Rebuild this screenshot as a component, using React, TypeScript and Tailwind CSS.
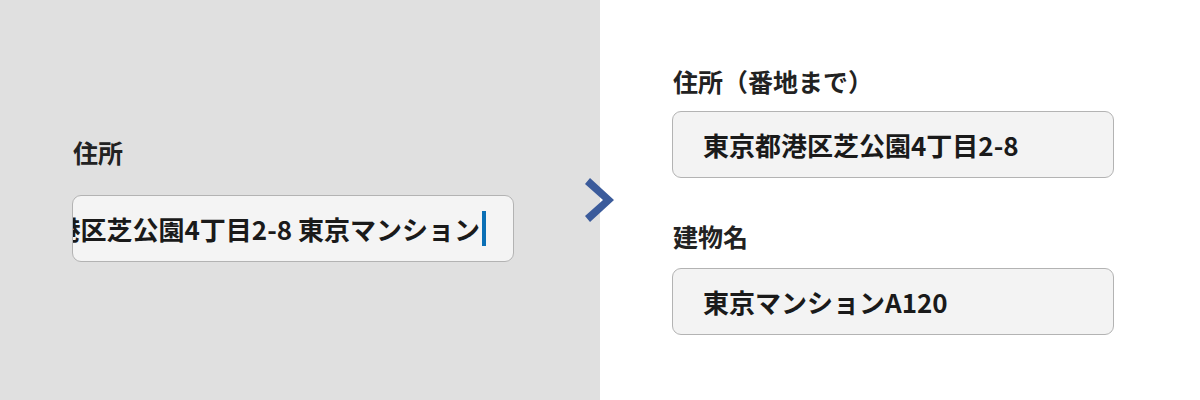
import React from 'react';

const font = { fontFamily: '"Noto Sans CJK JP", "Noto Sans", sans-serif' };

const Label: React.FC<{ children: React.ReactNode }> = ({ children }) => (
  <div className="text-[25px] leading-[32px] font-bold text-[#222222]">{children}</div>
);

const Field: React.FC<{ value: string }> = ({ value }) => (
  <div className="h-[67px] w-[442px] rounded-[9px] border border-[#b3b3b3] bg-[#f3f3f3] flex items-center pl-[30px]">
    <span className="text-[26px] font-bold text-[#1a1a1a] whitespace-nowrap">{value}</span>
  </div>
);

// input that is being typed into: text scrolled to the end, caret after it
const ActiveField: React.FC<{ value: string }> = ({ value }) => (
  <div className="h-[67px] w-[442px] rounded-[9px] border border-[#b3b3b3] bg-[#f4f4f4] flex items-center justify-end overflow-hidden pr-[27px]">
    <span className="text-[26px] font-bold text-[#1a1a1a] whitespace-nowrap">{value}</span>
    <span className="ml-[2px] h-[35px] w-[4px] shrink-0 bg-[#0a6fb5]" />
  </div>
);

export default function App() {
  return (
    <div className="relative flex h-[400px] w-[1200px]" style={font}>
      <div className="flex w-[600px] flex-col justify-center bg-[#e0e0e0] pl-[72px] pb-[2px]">
        <div className="mb-[27px] pl-[1px]">
          <Label>住所</Label>
        </div>
        <ActiveField value="東京都港区芝公園4丁目2-8 東京マンション" />
      </div>

      <div className="flex w-[600px] flex-col justify-center bg-white pl-[72px]">
        <div className="mb-[14px] pl-[1px]">
          <Label>住所（番地まで）</Label>
        </div>
        <Field value="東京都港区芝公園4丁目2-8" />
        <div className="mt-[42px] mb-[16px] pl-[1px]">
          <Label>建物名</Label>
        </div>
        <Field value="東京マンションA120" />
      </div>

      <svg
        className="absolute left-[580px] top-[175px]"
        width="40"
        height="50"
        viewBox="0 0 40 50"
      >
        <polygon points="10,3 34,25 10,47 5,41 23,25 5,9" fill="#3b5b9b" />
      </svg>
    </div>
  );
}
